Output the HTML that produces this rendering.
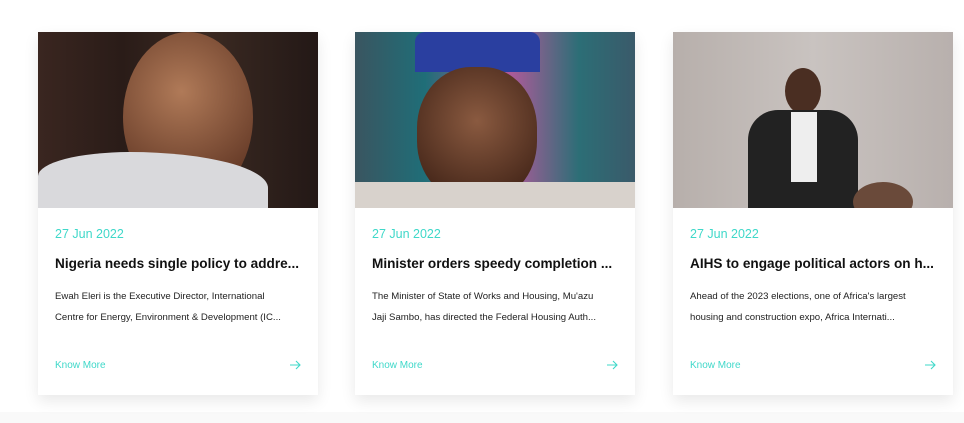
<!DOCTYPE html>
<html><head><style>
body{margin:0;width:964px;height:423px;background:#fff;font-family:"Liberation Sans",sans-serif;position:relative;overflow:hidden}
.bot{position:absolute;left:0;right:0;top:412px;height:11px;background:#f9f9f9}
.card{position:absolute;top:32px;width:280px;height:363px;background:#fff;box-shadow:0 6px 14px rgba(0,0,0,.09)}
.img{height:176px;position:relative;overflow:hidden}
.d{position:absolute;left:17px;top:195px;color:#3fd8c9;font-size:12.5px}
.t{position:absolute;left:17px;top:224px;font-size:13.6px;font-weight:bold;color:#111;white-space:nowrap}
.p{position:absolute;left:17px;top:254px;width:232px;font-size:9.6px;line-height:21px;color:#222}
.k{position:absolute;left:17px;top:328px;font-size:10px;color:#3fd8c9}
.a{position:absolute;right:17px;top:328px}
</style></head><body>
<div class="bot"></div>
<div class="card" style="left:38px">
<div class="img" style="background:linear-gradient(90deg,#3a2620 0%,#2a1c18 30%,#3b2a22 60%,#231816 100%)">
<div style="position:absolute;left:85px;top:0;width:130px;height:170px;border-radius:50%;background:radial-gradient(circle at 45% 35%,#b07a58,#6a3e2a 70%)"></div>
<div style="position:absolute;left:0;top:120px;width:230px;height:60px;background:#d9d9dc;border-radius:40% 60% 0 0"></div>
</div>
<div class="d">27 Jun 2022</div>
<div class="t">Nigeria needs single policy to addre...</div>
<div class="p">Ewah Eleri is the Executive Director, International Centre for Energy, Environment &amp; Development (IC...</div>
<div class="k">Know More</div><svg class="a" width="12" height="10" viewBox="0 0 12 10"><path d="M1 5H11M7 1L11 5L7 9" fill="none" stroke="#3fd8c9" stroke-width="1.1"/></svg>
</div>
<div class="card" style="left:355px">
<div class="img" style="background:linear-gradient(90deg,#3a5560 0%,#1f6e78 25%,#b05a9a 55%,#2c6e76 80%,#3a5a6a 100%)">
<div style="position:absolute;left:60px;top:0;width:125px;height:40px;background:#2a3fa0;border-radius:10px 10px 0 0"></div>
<div style="position:absolute;left:62px;top:35px;width:120px;height:135px;border-radius:45%;background:radial-gradient(circle at 50% 40%,#8a5a40,#4a2a1c 75%)"></div>
<div style="position:absolute;left:0;top:150px;width:280px;height:30px;background:#d8d2cc"></div>
</div>
<div class="d">27 Jun 2022</div>
<div class="t">Minister orders speedy completion ...</div>
<div class="p">The Minister of State of Works and Housing, Mu'azu Jaji Sambo, has directed the Federal Housing Auth...</div>
<div class="k">Know More</div><svg class="a" width="12" height="10" viewBox="0 0 12 10"><path d="M1 5H11M7 1L11 5L7 9" fill="none" stroke="#3fd8c9" stroke-width="1.1"/></svg>
</div>
<div class="card" style="left:673px">
<div class="img" style="background:linear-gradient(90deg,#b7afab,#c9c3c0 50%,#b8b0ad)">
<div style="position:absolute;left:112px;top:36px;width:36px;height:46px;border-radius:50%;background:#4a2e22"></div>
<div style="position:absolute;left:75px;top:78px;width:110px;height:100px;background:#222;border-radius:30px 30px 0 0"></div>
<div style="position:absolute;left:118px;top:80px;width:26px;height:70px;background:#eee"></div>
<div style="position:absolute;left:180px;top:150px;width:60px;height:40px;border-radius:50%;background:#6a4a3a"></div>
</div>
<div class="d">27 Jun 2022</div>
<div class="t">AIHS to engage political actors on h...</div>
<div class="p">Ahead of the 2023 elections, one of Africa's largest housing and construction expo, Africa Internati...</div>
<div class="k">Know More</div><svg class="a" width="12" height="10" viewBox="0 0 12 10"><path d="M1 5H11M7 1L11 5L7 9" fill="none" stroke="#3fd8c9" stroke-width="1.1"/></svg>
</div>
</body></html>
